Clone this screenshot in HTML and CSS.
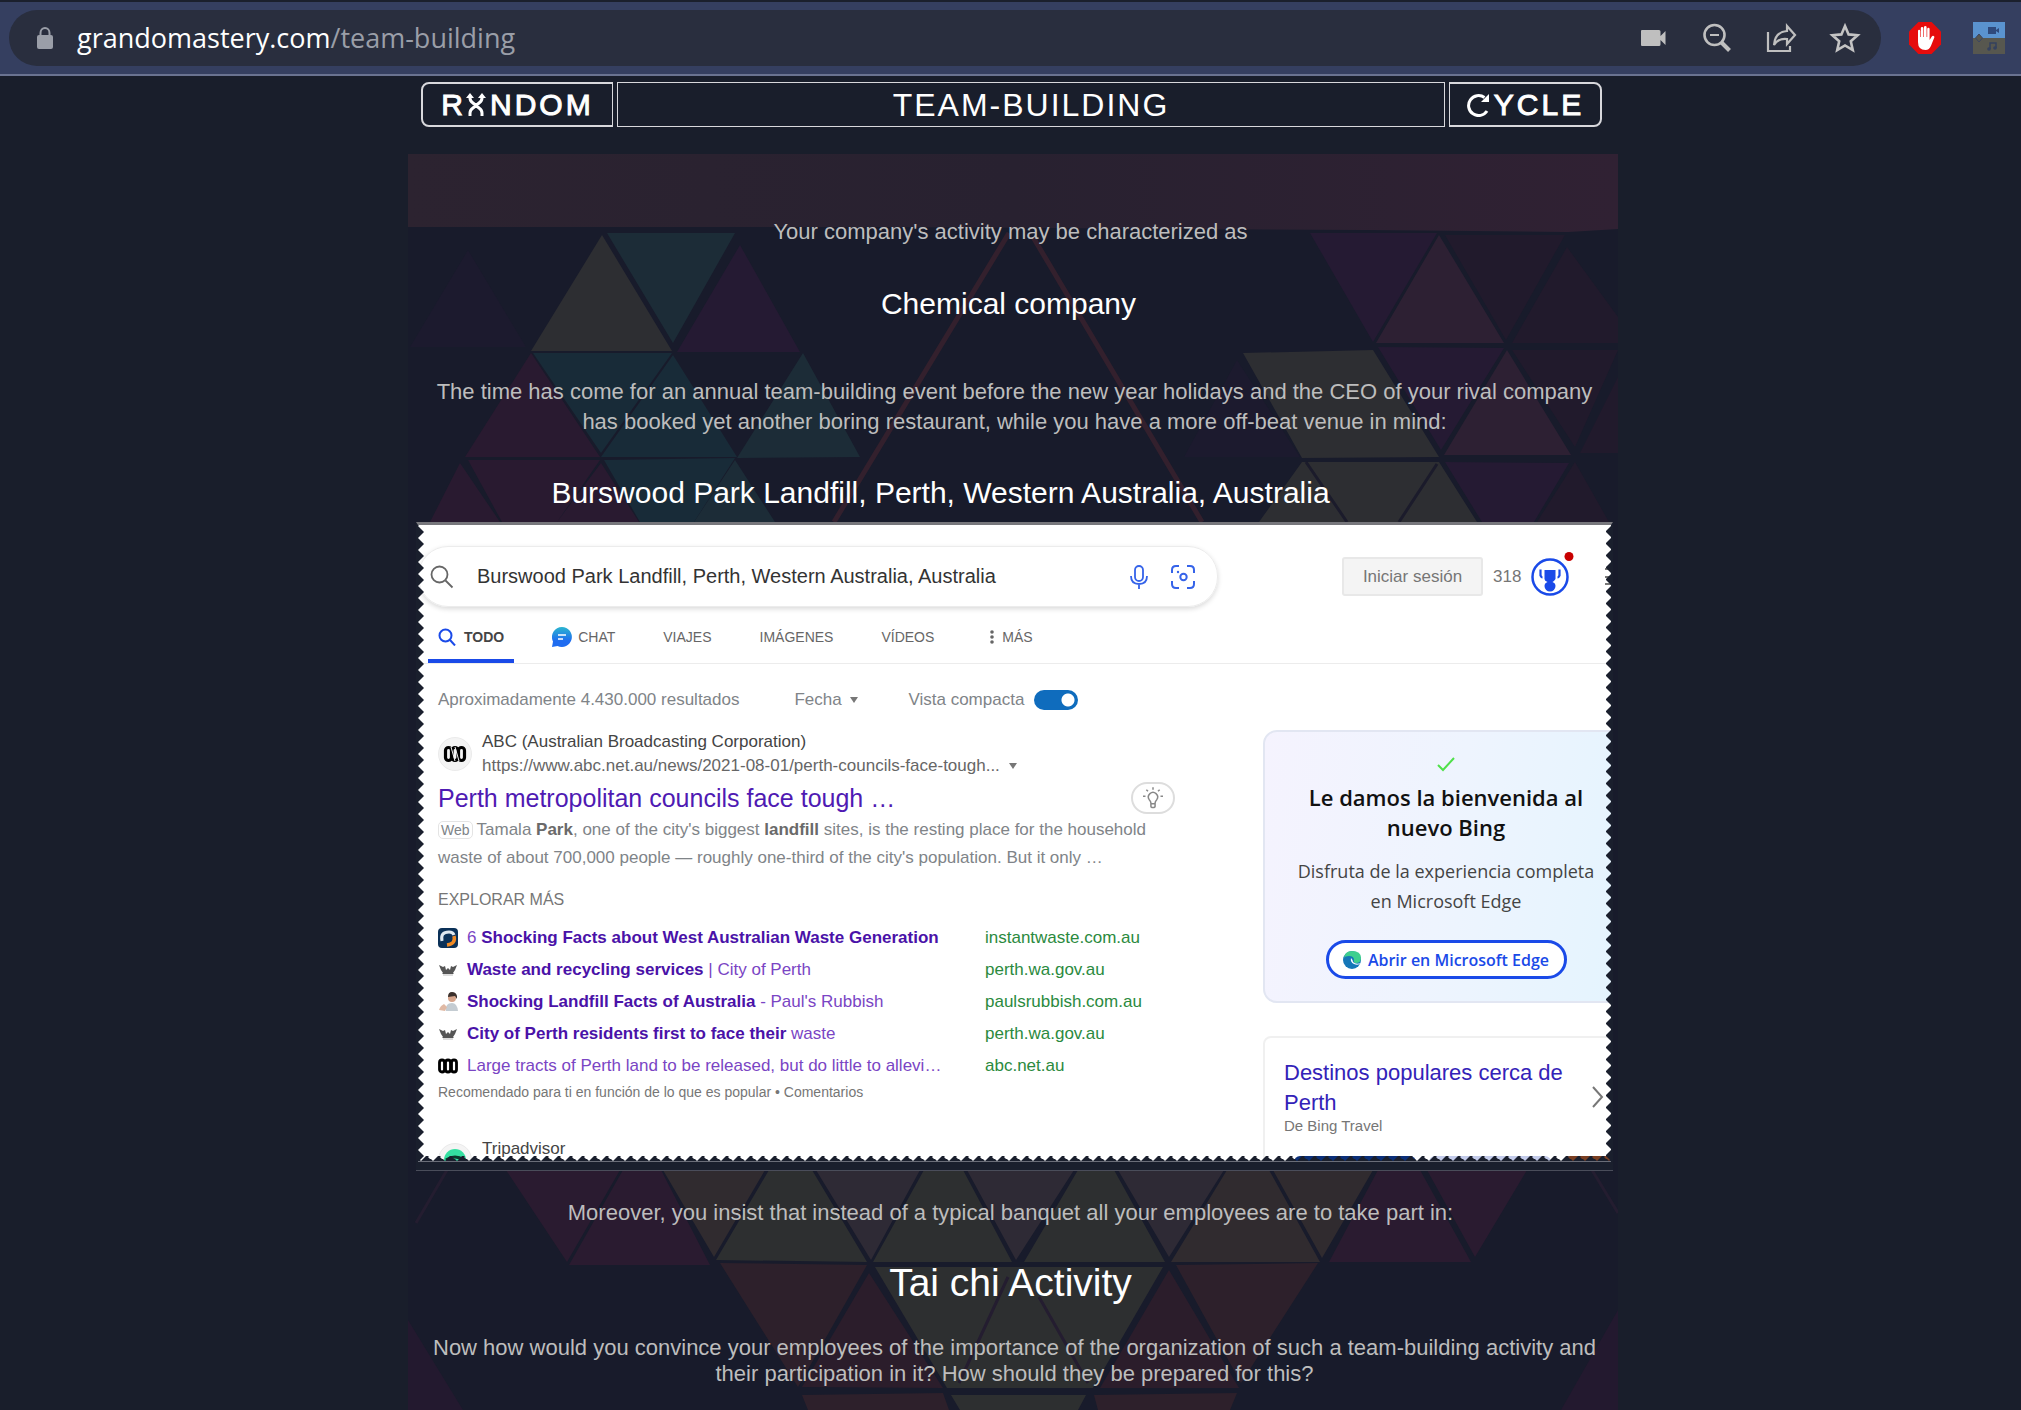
FILE: index.html
```html
<!DOCTYPE html>
<html lang="en">
<head>
    <meta charset="UTF-8">
    <meta name="viewport" content="width=device-width, initial-scale=1.0">
    <title>Team-building</title>
    <link rel="stylesheet" href="styles.css">
</head>
<body>
    <!-- Browser bar -->
    <header class="browser">
        <div class="omnibox">
            <svg class="lock" viewBox="0 0 16 22"><path d="M3.5 9V6a4.500 5 0 0 1 9 0v3" fill="none" stroke="#9a9ea8" stroke-width="2"/><rect y="8" width="16" height="14" rx="2" fill="#9a9ea8"/></svg>
            <div class="url">grandomastery.com<span>/team-building</span></div>
            <button type="button" aria-label="Camera"><svg viewBox="0 0 32 32"><path d="M5 8h17q1.500 0 1.500 1.500V14l5-5v14l-5-5v4.500Q23.500 24 22 24H5q-1-0-1-1V9q0-1 1-1z" fill="#bfbfbf"/></svg></button>
            <button type="button" aria-label="Zoom out"><svg viewBox="0 0 32 32" fill="none" stroke="#bfbfbf"><circle cx="13.500" cy="13" r="10" stroke-width="2.600"/><path d="M9 13h9" stroke-width="2"/><path d="M20.500 20.500l8 8" stroke-width="4"/></svg></button>
            <button type="button" aria-label="Share"><svg viewBox="0 0 32 32" fill="none" stroke="#bfbfbf" stroke-width="2.200"><path d="M3 10v19h22v-5"/><path d="M22 4l8 9-8 9v-5q-9-1-13 6 1-13 13-14z"/></svg></button>
            <button type="button" aria-label="Bookmark"><svg viewBox="0 0 32 32"><path d="M16 4l3.600 8.400 9 .8-6.800 6 2 8.900-7.800-4.700-7.800 4.700 2-8.900-6.800-6 9-.8z" fill="none" stroke="#c4c4c4" stroke-width="2.600"/></svg></button>
        </div>
        <div class="extensions">
            <svg viewBox="0 0 32 32"><path d="M9.400 0h13.200L32 9.400v13.200L22.600 32H9.400L0 22.600V9.400z" fill="#e60c0c"/><path d="M9 17V9q0-1.300 1.100-1.300T11.200 9v6h.6V6.300q0-1.300 1.300-1.300t1.300 1.300V15h.6V5.300q0-1.300 1.300-1.300t1.300 1.300V15h.6V7q0-1.300 1.200-1.300T20.600 7v11l2.200-3.600q.8-1 1.900-.5t.6 1.700l-3.300 8.200Q20.300 28 16.500 28 9 28 9 20z" fill="#fff"/></svg>
            <svg viewBox="0 0 32 32"><path d="M0 0h32v16H0z" fill="#5a93cf"/><path d="M0 16h32v16H0z" fill="#57574f"/><path d="M15 5h8v7h-8zM23 8l3-2v5l-3-2z" fill="#2f4a7c"/><path d="M2.500 16L6 12l3.500 4L6 20z" fill="#57574f" stroke="#3c4661"/><path d="M17 27v-6h6v5" fill="none" stroke="#34415f" stroke-width="1.500"/><circle cx="16" cy="27" r="1.800" fill="#34415f"/><circle cx="22" cy="26" r="1.800" fill="#34415f"/></svg>
        </div>
    </header>

    <div class="page">
        <nav class="top-nav">
            <a class="nav-random" href="#" aria-label="Random">R<svg viewBox="0 0 20 24" fill="none" stroke="#fff" stroke-width="3"><path d="M4 23v-3q0-3 3-5l6-5q3-2 3-5V3M16 23v-3q0-3-3-5L7 10Q4 8 4 5V3"/><path d="M0 5l4-5 4 5zM12 5l4-5 4 5z" fill="#fff" stroke="none"/></svg>NDOM</a>
            <a class="nav-title" href="#">TEAM-BUILDING</a>
            <a class="nav-cycle" href="#" aria-label="Cycle"><svg viewBox="0 0 24 24" fill="none" stroke="#fff" stroke-width="3"><path d="M21 18A10 10 0 1 1 18.500 4.500"/><path d="M23 1v8h-8z" fill="#fff" stroke="none"/></svg>YCLE</a>
        </nav>

        <main class="panel">
            <!-- Triangle mosaic -->
            <svg class="mosaic" viewBox="408 154 1210 1256" preserveAspectRatio="xMidYMin slice" aria-hidden="true">
                <defs>
                    <linearGradient id="beam"><stop offset="0" stop-color="#2c2330"/><stop offset=".5" stop-color="#282130"/><stop offset="1" stop-color="#302133"/></linearGradient>
                </defs>
                <path d="M408 154h1210v75l-50 3-200-2-480-3-480 0z" fill="url(#beam)"/>
                <g fill="#1c1a2e"><path d="M468 250l-58 97h116zM1237 360l-53 97h116z"/></g>
                <g fill="#2d2e32"><path d="M602 235l-71 116h141zM1243 353l130-3 66 107-137 1zM1302 462h137l38 60h-218z"/></g>
                <g fill="#1c2c37"><path d="M607 233h128l-62 110zM803 353l-66 105 123-1zM735 460l40 62h-81z"/></g>
                <g fill="#182b38"><path d="M533 353h139l-71 100zM673 355l-72 102h136zM604 460l131-2-41 64h-54z"/></g>
                <g fill="#251a33"><path d="M740 245l-63 107h123zM1310 233h127l-64 109zM1378 347l126 1-63 102zM1445 462l124 1-35 59h-52z"/></g>
                <g fill="#291a30"><path d="M531 353l-66 104h135zM468 460h132l-43 62h-55zM601 463l-44 59h82zM460 463l-30 59h70z"/></g>
                <g fill="#2d2033"><path d="M1439 235l-63 108h128zM1507 350l-63 105h127z"/></g>
                <g fill="#211a2c"><path d="M1445 235h120l-59 105zM1567 247l-55 96h106v-26zM1512 350h106l-43 97zM1618 377l-38 76h38zM1575 462l-38 60h72z"/></g>
                <g fill="none" stroke="#33202d" stroke-width="5"><path d="M1009 233L834 522M1033 237l169 285"/></g>
                <g fill="none" stroke="#1b1b2b" stroke-width="3"><path d="M1306 462l41 60M1437 464l-38 58"/></g>

                <g fill="#2a1b30"><path d="M506 1170h114l-53 92zM623 1170h38l49 95H569zM1378 1170h42l51 92h-142zM1427 1170h100l-52 87z"/></g>
                <g fill="#302b2f"><path d="M663 1170h102l-51 87zM1227 1170h42l51 92h-149zM1273 1170h100l-51 88z"/></g>
                <g fill="#2d2f30"><path d="M769 1170h43l55 92-151-2zM924 1170h39l49 92H873zM1078 1170h36l51 92h-141zM875 1267h288l-70 121H947zM951 1395h135l-8 15H960z"/></g>
                <g fill="#2e2a35"><path d="M816 1170h104l-49 90zM967 1170h107l-58 90zM1118 1170h106l-55 87z"/></g>
                <g fill="#2d202b"><path d="M720 1263l147 2-69 122zM1176 1265l142-2-77 120zM802 1395l141-2 6 17H808zM1094 1395l143-2-7 17h-132z"/></g>
                <g fill="#2b1d2b"><path d="M869 1273l-67 114 141 1zM1169 1270l-69 118h139z"/></g>
                <g fill="#23192f"><path d="M408 1320l55 90h-55zM1618 1310l-57 100h57z"/></g>
                <g fill="none" stroke="#241d30" stroke-width="3"><path d="M1008 1277l-49 106M1039 1297l49 86M447 1170l-31 53M1592 1170l26 43"/></g>
            </svg>

            <p class="brief">Your company's activity may be characterized as</p>
            <h2 class="company">Chemical company</h2>
            <p class="event">The time has come for an annual team-building event before the new year holidays and the CEO of your rival company has booked yet another boring restaurant, while you have a more off-beat venue in mind:</p>
            <h2 class="venue">Burswood Park Landfill, Perth, Western Australia, Australia</h2>

            <!-- Search results -->
            <section class="shot" lang="es">
                <div class="search-row">
                    <div class="search-box">
                        <svg width="24" height="24" viewBox="0 0 24 24" fill="none" stroke="#666" stroke-width="1.800"><circle cx="9.500" cy="9.500" r="8"/><path d="M15.500 15.500l7 7"/></svg>
                        <input type="text" aria-label="Buscar" value="Burswood Park Landfill, Perth, Western Australia, Australia">
                        <button type="button" aria-label="Voz"><svg viewBox="0 0 24 24" fill="none" stroke="#3563e9" stroke-width="1.800"><rect x="8" y="1" width="8" height="15" rx="4"/><path d="M4 11q0 8 8 8t8-8M12 19v5"/></svg></button>
                        <button type="button" aria-label="Imagen"><svg viewBox="0 0 24 24" fill="none" stroke="#3563e9" stroke-width="2"><path d="M1 8V5q0-4 4-4h3M16 1h3q4 0 4 4v3M23 16v3q0 4-4 4h-3M8 23H5q-4 0-4-4v-3"/><circle cx="12.500" cy="12" r="3.200"/><circle cx="7" cy="7" r="1.200" fill="#3563e9" stroke="none"/></svg></button>
                    </div>
                    <button type="button" class="sign-in">Iniciar sesión</button>
                    <span class="points">318</span>
                    <svg class="reward" viewBox="0 0 46 46"><circle cx="19" cy="25" r="17.500" fill="#fff" stroke="#1a4ae8" stroke-width="2.500"/><path d="M13.500 18h11v9q-2 3-3 3 3 1 3 4a5 5 0 0 1-11 0q0-3 3-4-3-1-3-3z" fill="#1a4ae8"/><path d="M9.500 17.500v6q1 2 2 2M28.500 17.500v6q-1 2-2 2" fill="none" stroke="#1a4ae8" stroke-width="2.200"/><circle cx="38" cy="4.500" r="4.500" fill="#c80000"/></svg>
                    <svg class="menu" width="12" height="18" viewBox="0 0 12 18"><path d="M0 1h12M0 9h12M0 16h12" stroke="#777" stroke-width="2"/></svg>
                </div>

                <nav class="tabs">
                    <a class="active" href="#"><svg width="18" height="18" viewBox="0 0 18 18" fill="none" stroke="#1a4ae8" stroke-width="2"><circle cx="7.500" cy="7.500" r="6"/><path d="M12 12l5 5.500"/></svg>TODO</a>
                    <a class="chat" href="#"><svg width="20" height="20" viewBox="0 0 20 20"><defs><linearGradient id="bubble" x2="0" y2="1"><stop offset="0" stop-color="#2bb5cf"/><stop offset=".7" stop-color="#1f6cf0"/></linearGradient></defs><path d="M10 0a10 10 0 1 1-4.500 19L0 20l1-5.500A10 10 0 0 1 10 0z" fill="url(#bubble)"/><path d="M6 8h8M6 12h5" stroke="#fff" stroke-width="1.600"/></svg>CHAT</a>
                    <a href="#">VIAJES</a>
                    <a href="#">IMÁGENES</a>
                    <a href="#">VÍDEOS</a>
                    <a class="more" href="#"><svg width="4" height="14" viewBox="0 0 4 14" fill="#666"><circle cx="2" cy="2" r="1.800"/><circle cx="2" cy="7" r="1.800"/><circle cx="2" cy="12" r="1.800"/></svg>MÁS</a>
                </nav>

                <div class="content">
                    <div class="results">
                        <div class="tools">
                            <span class="count">Aproximadamente 4.430.000 resultados</span>
                            <button type="button" class="date">Fecha <span class="caret"></span></button>
                            <label for="compact">Vista compacta</label>
                            <input type="checkbox" id="compact" class="toggle" checked>
                        </div>

                        <article>
                            <div class="source">
                                <svg width="34" height="34" viewBox="0 0 34 34"><circle cx="17" cy="17" r="16.500" fill="#f4f4f4" stroke="#eaeaea"/><g fill="none" stroke="#000" stroke-width="3.200"><rect x="7.500" y="10.500" width="6" height="13" rx="3"/><rect x="14" y="10.500" width="6" height="13" rx="3"/><rect x="20.500" y="10.500" width="6" height="13" rx="3"/></g><path d="M13 10l4 14M17 10l4 14" stroke="#f4f4f4"/></svg>
                                <div>
                                    <div class="site">ABC (Australian Broadcasting Corporation)</div>
                                    <cite>https://www.abc.net.au/news/2021-08-01/perth-councils-face-tough... <span class="caret"></span></cite>
                                </div>
                            </div>
                            <div class="title-row">
                                <h3><a href="#">Perth metropolitan councils face tough …</a></h3>
                                <button type="button" class="hint" aria-label="Idea"><svg width="20" height="22" viewBox="0 0 24 26" fill="none" stroke="#888" stroke-width="1.800"><path d="M9.500 19q0-2-2-4a5.500 5.500 0 1 1 9 0q-2 2-2 4v4q0 1.500-2.500 1.500T9.500 23zM9.500 20h5M12 0v3M4 3l2 2M20 3l-2 2M0 11h3M21 11h3"/></svg></button>
                            </div>
                            <p class="snippet"><span class="tag">Web</span>Tamala <b>Park</b>, one of the city's biggest <b>landfill</b> sites, is the resting place for the household waste of about 700,000 people — roughly one-third of the city's population. But it only …</p>
                        </article>

                        <h4>EXPLORAR MÁS</h4>
                        <ul class="explore">
                            <li>
                                <svg viewBox="0 0 20 20"><rect width="20" height="20" rx="4" fill="#0b3158"/><path d="M4 13Q2 4 11 4q4 0 5 3" fill="none" stroke="#dfe8f0" stroke-width="3"/><path d="M16 8q2 8-7 9" fill="none" stroke="#f08a24" stroke-width="3.500"/></svg>
                                <a href="#">6 <b>Shocking Facts about West Australian Waste Generation</b></a><span>instantwaste.com.au</span>
                            </li>
                            <li>
                                <svg viewBox="0 0 20 20"><path d="M1 5l4 2 2-1 1 4 2-2 2 2 1-4 2 1 4-2-2 5-2 3 1 1H4l1-1-2-3z" fill="#555"/><path d="M5 15h10" stroke="#bbb"/></svg>
                                <a href="#"><b>Waste and recycling services</b> | City of Perth</a><span>perth.wa.gov.au</span>
                            </li>
                            <li>
                                <svg viewBox="0 0 20 20"><path d="M8 19q-1-8 6-8 5 0 6 8z" fill="#c4ccd2"/><circle cx="14" cy="6" r="4" fill="#d6a58c"/><path d="M10 5q0-5 4-5t5 4v3l-2-3z" fill="#3b302c"/><path d="M1 18q1-4 5-6l3 3-2 4z" fill="#e0b9a4"/></svg>
                                <a href="#"><b>Shocking Landfill Facts of Australia</b> - Paul's Rubbish</a><span>paulsrubbish.com.au</span>
                            </li>
                            <li>
                                <svg viewBox="0 0 20 20"><path d="M1 5l4 2 2-1 1 4 2-2 2 2 1-4 2 1 4-2-2 5-2 3 1 1H4l1-1-2-3z" fill="#555"/><path d="M5 15h10" stroke="#bbb"/></svg>
                                <a href="#"><b>City of Perth residents first to face their</b> waste</a><span>perth.wa.gov.au</span>
                            </li>
                            <li>
                                <svg viewBox="0 0 20 20"><g fill="none" stroke="#000" stroke-width="2.800"><rect x="1.500" y="4" width="5" height="12" rx="2.500"/><rect x="7.500" y="4" width="5" height="12" rx="2.500"/><rect x="13.500" y="4" width="5" height="12" rx="2.500"/></g></svg>
                                <a href="#">Large tracts of Perth land to be released, but do little to allevi…</a><span>abc.net.au</span>
                            </li>
                        </ul>
                        <p class="note">Recomendado para ti en función de lo que es popular • Comentarios</p>
                        <div class="source next">
                            <svg width="34" height="34" viewBox="0 0 34 34"><circle cx="17" cy="17" r="16.500" fill="#f4f4f4" stroke="#eaeaea"/><circle cx="17" cy="17" r="11" fill="#34e0a1"/><path d="M8 17q9-6 18 0" fill="none" stroke="#0b3a2c" stroke-width="3"/></svg>
                            <div class="site">Tripadvisor</div>
                        </div>
                    </div>

                    <aside>
                        <div class="card welcome">
                            <svg width="18" height="18" viewBox="0 0 18 18" fill="none" stroke="#4fe04a" stroke-width="2"><path d="M1 10l5 5L17 3"/></svg>
                            <h3>Le damos la bienvenida al nuevo Bing</h3>
                            <p>Disfruta de la experiencia completa en Microsoft Edge</p>
                            <button type="button"><svg width="18" height="18" viewBox="0 0 18 18"><circle cx="9" cy="9" r="9" fill="#1577b8"/><path d="M1 7Q2 0 9 0q9 0 9 7 0 5-5 5-3 0-2-3 0-4-5-4-4 0-5 2z" fill="#3fcf8e"/><path d="M18 12q-3 3-7 1t-3-6q2 2 2 4 3 3 8 1z" fill="#fff"/></svg>Abrir en Microsoft Edge</button>
                        </div>
                        <div class="card travel">
                            <h3><a href="#">Destinos populares cerca de Perth</a></h3>
                            <p>De Bing Travel</p>
                            <svg class="chevron" width="12" height="22" viewBox="0 0 12 22" fill="none" stroke="#777" stroke-width="2"><path d="M1 1l9 10-9 10"/></svg>
                            <div class="photos"><span class="sea"></span><span class="sky"></span><span class="rock"></span></div>
                        </div>
                    </aside>
                </div>
            </section>

            <p class="brief moreover">Moreover, you insist that instead of a typical banquet all your employees are to take part in:</p>
            <h1>Tai chi Activity</h1>
            <p class="question">Now how would you convince your employees of the importance of the organization of such a team-building activity and their participation in it? How should they be prepared for this?</p>
        </main>
    </div>
</body>
</html>
```
FILE: styles.css
```css
* {
    box-sizing: border-box;
}

body {
    margin: 0;
    min-height: 100vh;
    display: flex;
    flex-direction: column;
    background: #191e2b;
    color: #bdbdbd;
    font-family: "Liberation Sans", Arial, sans-serif;
    font-size: 22px;
    line-height: 30px;
    overflow: hidden;
}

h1, h2, h3, h4, p, ul {
    margin: 0;
    padding: 0;
    font-weight: normal;
}

a {
    color: inherit;
    text-decoration: none;
}

button {
    padding: 0;
    border: none;
    background: none;
    font-family: inherit;
    cursor: pointer;
}

svg {
    display: block;
    flex-shrink: 0;
}

/* Browser bar */
.browser {
    display: flex;
    align-items: center;
    gap: 28px;
    height: 76px;
    padding: 0 16px 0 9px;
    border-top: 2px solid #1b202d;
    border-bottom: 2px solid #6a7391;
    background: #353f60;
}

.omnibox {
    flex: 1;
    display: flex;
    align-items: center;
    gap: 32px;
    height: 56px;
    padding: 0 20px 0 28px;
    border-radius: 28px;
    background: #292e3e;
}

.lock {
    width: 16px;
    height: 22px;
    margin-right: -8px;
}

.url {
    flex: 1;
    color: #fff;
    font-family: "Open Sans", "Noto Sans", sans-serif;
    font-size: 27px;
}

.url span {
    color: #9a9ea8;
}

.omnibox button, .omnibox button svg, .extensions svg {
    width: 32px;
    height: 32px;
}

.extensions {
    display: flex;
    gap: 32px;
}

/* Page */
.page {
    flex: 1;
    display: flex;
    flex-direction: column;
    width: 100%;
    max-width: 1215px;
    margin: 0 auto;
    padding-left: 5px;
}

.top-nav {
    display: flex;
    gap: 4px;
    padding: 6px 16px 27px 13px;
    color: #fff;
    font-size: 32px;
    letter-spacing: 2px;
}

.top-nav a {
    display: flex;
    align-items: center;
    justify-content: center;
    height: 45px;
    border: 2px solid #d8d8dc;
}

.top-nav .nav-title {
    flex: 1;
    border-width: 1px;
}

.top-nav .nav-random, .top-nav .nav-cycle {
    font-size: 30px;
    letter-spacing: 3px;
    -webkit-text-stroke: 1px #fff;
}

.top-nav .nav-random {
    width: 192px;
    border-right-width: 1px;
    border-radius: 8px 0 0 8px;
}

.top-nav .nav-cycle {
    width: 153px;
    border-left-width: 1px;
    border-radius: 0 8px 8px 0;
}

.top-nav svg {
    width: 20px;
    height: 24px;
    margin-right: 4px;
}

.top-nav .nav-cycle svg {
    width: 24px;
}

.panel {
    position: relative;
    flex: 1;
    padding: 63px 5px 0 8px;
    background: #181b2b;
    text-align: center;
}

.mosaic {
    position: absolute;
    inset: 0;
    width: 100%;
    height: 100%;
}

.panel > p, .panel > h1, .panel > h2 {
    position: relative;
}

.panel > h1, .panel > h2 {
    color: #fff;
}

.panel > h2 {
    font-size: 30px;
    line-height: 40px;
}

.brief, .panel > h1 {
    padding-right: 8px;
}

.company {
    margin: 37px 0 53px;
    padding-right: 12px;
}

.event {
    margin-bottom: 36px;
}

.venue {
    margin-bottom: 9px;
    padding-right: 148px;
}

.moreover {
    margin-top: 28px;
}

.panel > h1 {
    margin: 31px 0 28px;
    font-size: 39px;
    line-height: 48px;
}

.question {
    line-height: 26px;
}

/* Torn-paper frame with the search results */
.shot {
    position: relative;
    height: 648px;
    overflow: hidden;
    border: 2px solid #1a1f2d;
    border-top: 3px solid #77777c;
    border-bottom: 8px solid #1a1f2d;
    background: #fff;
    color: #767676;
    font-size: 17px;
    text-align: left;
    box-shadow: 0 1px 0 #4a4d5a;
}

.shot::before, .shot::after {
    content: "";
    position: absolute;
    inset: 0;
    z-index: 2;
    pointer-events: none;
}

.shot::before {
    background:
        conic-gradient(from 225deg at 100% 50%, #1a1f2d 90deg, transparent 0) left / 6px 12px repeat-y,
        conic-gradient(from 45deg at 0 50%, #1a1f2d 90deg, transparent 0) right / 6px 12px repeat-y;
}

.shot::after {
    background: conic-gradient(from 135deg at 50% 0, #1a1f2d 90deg, transparent 0) bottom / 12px 6px repeat-x;
    border-bottom: 1px solid #6a6d78;
}

.search-row {
    display: flex;
    align-items: center;
    padding: 21px 0 0;
}

.search-box {
    display: flex;
    flex-shrink: 0;
    align-items: center;
    gap: 20px;
    width: 800px;
    height: 61px;
    padding: 0 22px 0 11px;
    border: 1px solid #ececec;
    border-radius: 30px;
    box-shadow: 0 2px 5px rgba(0, 0, 0, 0.15);
}

.search-box input {
    flex: 1;
    padding: 0 0 0 3px;
    border: none;
    outline: none;
    background: none;
    color: #333;
    font-family: inherit;
    font-size: 20px;
}

.search-box button, .search-box button svg {
    width: 24px;
    height: 24px;
}

.sign-in {
    flex-shrink: 0;
    width: 141px;
    height: 39px;
    margin-left: 124px;
    border: 2px solid #e8e8e8;
    border-radius: 3px;
    background: #f4f4f4;
    color: #767676;
    font-size: 17px;
}

.points {
    margin: 0 10px;
}

.reward {
    width: 46px;
    height: 46px;
    margin-top: -4px;
}

.menu {
    margin-left: 28px;
}

.tabs {
    display: flex;
    gap: 28px;
    height: 57px;
    padding-left: 10px;
    border-bottom: 1px solid #ececec;
    color: #666;
    font-size: 14px;
}

.tabs a {
    display: flex;
    align-items: center;
    gap: 8px;
    padding: 7px 10px 0;
    border-bottom: 4px solid transparent;
}

.tabs .active {
    border-color: #1a4ae8;
    color: #444;
    font-weight: bold;
}

.tabs .chat {
    gap: 6px;
}

.tabs .more {
    margin-left: 8px;
}

.content {
    display: grid;
    grid-template-columns: 845px 366px;
}

.results {
    width: 765px;
    padding: 26px 0 0 20px;
}

.tools {
    display: flex;
    align-items: center;
    height: 20px;
    margin-bottom: 20px;
    color: #808488;
}

.caret {
    display: inline-block;
    margin: 0 0 2px 4px;
    border: 4px solid transparent;
    border-top: 6px solid #777;
    border-bottom: none;
}

.date {
    margin: 0 50px 0 55px;
    color: inherit;
    font-size: 17px;
}

.toggle {
    appearance: none;
    width: 44px;
    height: 20px;
    margin: 0 0 0 10px;
    border-radius: 10px;
    background: radial-gradient(circle at 34px 10px, #fff 6px, #0f6cbd 7px);
}

.source {
    display: flex;
    align-items: center;
    gap: 10px;
    height: 48px;
    color: #444;
    line-height: 24px;
}

.source cite {
    color: #666;
    font-style: normal;
}

.title-row {
    display: flex;
    align-items: center;
    justify-content: space-between;
    height: 38px;
    padding: 2px 8px 0 0;
}

.title-row h3 {
    color: #4f1ab3;
    font-size: 25px;
}

.hint {
    display: flex;
    align-items: center;
    justify-content: center;
    width: 44px;
    height: 32px;
    border: 2px solid #ddd;
    border-radius: 16px;
}

.snippet {
    color: #808488;
    line-height: 28px;
}

.snippet b {
    color: #6a6a6a;
}

.tag {
    margin-right: 4px;
    padding: 0 2px;
    border: 1px solid #e4e4e4;
    border-radius: 5px;
    font-size: 14px;
    line-height: 16px;
}

h4 {
    margin: 13px 0 7px;
    font-size: 16px;
}

.explore {
    list-style: none;
}

.explore li {
    display: grid;
    grid-template-columns: 20px 509px auto;
    gap: 9px;
    align-items: center;
    height: 32px;
}

.explore a {
    color: #7a45c4;
}

.explore b {
    color: #4a12a8;
}

.explore span {
    color: #2b8a3e;
}

.note {
    font-size: 14px;
    line-height: 20px;
}

.next {
    align-items: flex-start;
    margin-top: 35px;
}

.next svg {
    margin-top: 6px;
}

/* Right column */
aside {
    padding-top: 66px;
}

.card {
    border: 2px solid #e2e6f2;
    border-radius: 14px;
}

.welcome {
    display: flex;
    flex-direction: column;
    align-items: center;
    height: 273px;
    padding: 23px 20px 0;
    background: linear-gradient(100deg, #f5f3fe, #eef4fe 50%, #e4f4fe);
    color: #444;
    font-family: "Open Sans", "Noto Sans", sans-serif;
    font-size: 18px;
    text-align: center;
}

.welcome h3 {
    margin: 9px 0 14px;
    color: #111;
    font-size: 22px;
    font-weight: 600;
}

.welcome button {
    display: flex;
    align-items: center;
    justify-content: center;
    gap: 7px;
    width: 241px;
    height: 39px;
    margin-top: 24px;
    border: 3px solid #1a4ae8;
    border-radius: 20px;
    background: #fff;
    color: #1a4ae8;
    font-size: 16px;
    font-weight: 600;
}

.travel {
    position: relative;
    height: 160px;
    margin-top: 33px;
    padding: 20px 19px 0;
    border-color: #f0f0f0;
    border-radius: 8px;
}

.travel h3 {
    width: 300px;
    color: #3322b8;
    font-size: 22px;
}

.travel p {
    font-size: 15px;
    line-height: 16px;
}

.chevron {
    position: absolute;
    top: 48px;
    right: 23px;
}

.photos {
    display: flex;
    gap: 13px;
    margin: 22px 0 0 10px;
}

.photos span {
    flex: 0 0 122px;
    height: 20px;
    border-radius: 6px 6px 0 0;
}

.sea {
    background: #0b2f78;
}

.sky {
    background: #c3cbea;
}

.rock {
    background: #7a3f22;
}
```
